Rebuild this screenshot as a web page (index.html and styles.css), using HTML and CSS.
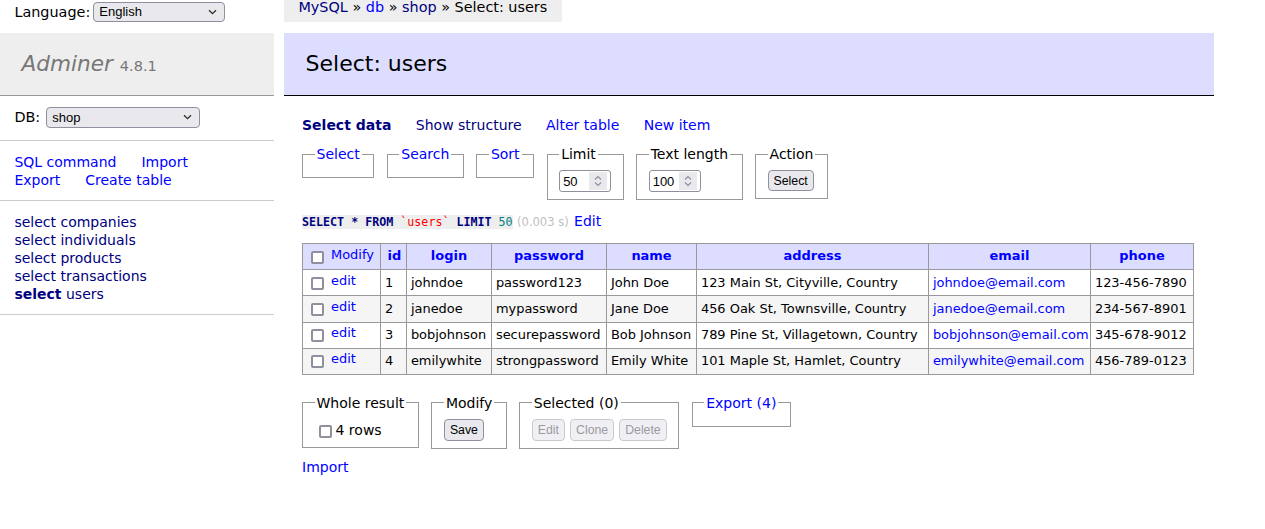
FILE: index.html
```html
<!DOCTYPE html>
<html lang="en">
<head>
<meta charset="utf-8">
<title>Select: users - Adminer</title>
<link rel="stylesheet" href="styles.css">
</head>
<body>
<div class="page">
  <aside class="sidebar">
    <form class="lang">
      <span class="lang-label">Language:</span>
      <span class="selwrap lang-sel">
        <select class="sel"><option>English</option></select>
        <svg class="chev" width="9" height="6" viewBox="0 0 9 6"><path d="M1 1.2 L4.5 4.7 L8 1.2" fill="none" stroke="#2b2b2b" stroke-width="1.3"/></svg>
      </span>
    </form>
    <h1><a class="brand" href="#">Adminer</a> <span class="version">4.8.1</span></h1>
    <div class="menu-sec db">
      <span>DB:</span>
      <span class="selwrap db-sel">
        <select class="sel"><option>shop</option></select>
        <svg class="chev" width="9" height="6" viewBox="0 0 9 6"><path d="M1 1.2 L4.5 4.7 L8 1.2" fill="none" stroke="#2b2b2b" stroke-width="1.3"/></svg>
      </span>
    </div>
    <div class="menu-sec links">
      <div class="link-row"><a href="#">SQL command</a><a href="#">Import</a></div>
      <div class="link-row"><a href="#">Export</a><a href="#">Create table</a></div>
    </div>
    <ul class="menu-sec tables">
      <li><a class="v" href="#">select</a> <a class="v" href="#">companies</a></li>
      <li><a class="v" href="#">select</a> <a class="v" href="#">individuals</a></li>
      <li><a class="v" href="#">select</a> <a class="v" href="#">products</a></li>
      <li><a class="v" href="#">select</a> <a class="v" href="#">transactions</a></li>
      <li><a class="v active" href="#">select</a> <a class="v" href="#">users</a></li>
    </ul>
  </aside>

  <main class="main">
    <div class="breadcrumb"><a class="v" href="#">MySQL</a> » <a href="#">db</a> » <a class="v" href="#">shop</a> » Select: users</div>
    <h2>Select: users</h2>
    <div class="content">
      <p class="tabs">
        <a class="v active" href="#">Select data</a>
        <a class="v" href="#">Show structure</a>
        <a href="#">Alter table</a>
        <a href="#">New item</a>
      </p>

      <form class="fsets">
        <fieldset><legend><a href="#">Select</a></legend></fieldset>
        <fieldset><legend><a href="#">Search</a></legend></fieldset>
        <fieldset><legend><a href="#">Sort</a></legend></fieldset>
        <fieldset><legend>Limit</legend>
          <span class="num"><input class="num-in" value="50"><span class="spin"><svg width="18" height="18" viewBox="0 0 18 18"><path d="M6 7.5 L9 4.5 L12 7.5 M6 10.5 L9 13.5 L12 10.5" fill="none" stroke="#8f8f9d" stroke-width="1.2"/></svg></span></span>
        </fieldset>
        <fieldset><legend>Text length</legend>
          <span class="num"><input class="num-in" value="100"><span class="spin"><svg width="18" height="18" viewBox="0 0 18 18"><path d="M6 7.5 L9 4.5 L12 7.5 M6 10.5 L9 13.5 L12 10.5" fill="none" stroke="#8f8f9d" stroke-width="1.2"/></svg></span></span>
        </fieldset>
        <fieldset><legend>Action</legend>
          <button type="button" class="btn btn-select">Select</button>
        </fieldset>
      </form>

      <p class="sql"><code class="jush"><span class="kw">SELECT</span> <span class="kw">*</span> <span class="kw">FROM</span> <span class="bac">`users`</span> <span class="kw">LIMIT</span> <span class="numv">50</span></code> <span class="time">(0.003 s)</span> <a href="#">Edit</a></p>

      <table class="data">
        <colgroup>
          <col class="c-mod"><col class="c-id"><col class="c-login"><col class="c-pass"><col class="c-name"><col class="c-addr"><col class="c-mail"><col class="c-phone">
        </colgroup>
        <thead>
          <tr>
            <td class="chk"><input type="checkbox" class="cb"> <a class="lk" href="#">Modify</a></td>
            <th><a href="#">id</a></th>
            <th><a href="#">login</a></th>
            <th><a href="#">password</a></th>
            <th><a href="#">name</a></th>
            <th><a href="#">address</a></th>
            <th><a href="#">email</a></th>
            <th><a href="#">phone</a></th>
          </tr>
        </thead>
        <tbody>
          <tr>
            <td class="chk"><input type="checkbox" class="cb"> <a class="lk" href="#">edit</a></td>
            <td>1</td><td>johndoe</td><td>password123</td><td>John Doe</td><td>123 Main St, Cityville, Country</td><td><a href="#">johndoe@email.com</a></td><td>123-456-7890</td>
          </tr>
          <tr>
            <td class="chk"><input type="checkbox" class="cb"> <a class="lk" href="#">edit</a></td>
            <td>2</td><td>janedoe</td><td>mypassword</td><td>Jane Doe</td><td>456 Oak St, Townsville, Country</td><td><a href="#">janedoe@email.com</a></td><td>234-567-8901</td>
          </tr>
          <tr>
            <td class="chk"><input type="checkbox" class="cb"> <a class="lk" href="#">edit</a></td>
            <td>3</td><td>bobjohnson</td><td>securepassword</td><td>Bob Johnson</td><td>789 Pine St, Villagetown, Country</td><td><a href="#">bobjohnson@email.com</a></td><td>345-678-9012</td>
          </tr>
          <tr>
            <td class="chk"><input type="checkbox" class="cb"> <a class="lk" href="#">edit</a></td>
            <td>4</td><td>emilywhite</td><td>strongpassword</td><td>Emily White</td><td>101 Maple St, Hamlet, Country</td><td><a href="#">emilywhite@email.com</a></td><td>456-789-0123</td>
          </tr>
        </tbody>
      </table>

      <div class="footer">
        <div class="fsets">
          <fieldset><legend>Whole result</legend>
            <label class="all"><input type="checkbox" class="cb"> 4 rows</label>
          </fieldset>
          <fieldset><legend>Modify</legend>
            <button type="button" class="btn">Save</button>
          </fieldset>
          <fieldset><legend>Selected (0)</legend>
            <div class="btns">
              <button type="button" class="btn" disabled>Edit</button>
              <button type="button" class="btn" disabled>Clone</button>
              <button type="button" class="btn" disabled>Delete</button>
            </div>
          </fieldset>
          <fieldset><legend><a href="#">Export (4)</a></legend></fieldset>
        </div>
      </div>
      <p class="import"><a href="#">Import</a></p>
    </div>
  </main>
</div>
</body>
</html>
```

FILE: styles.css
```css
* { box-sizing: border-box; }

body {
  margin: 0;
  background: #fff;
  color: #000;
  font-family: "DejaVu Sans", Verdana, sans-serif;
  font-size: 14px;
  line-height: 18px;
}

a { color: #00f; text-decoration: none; }
a.v { color: #000080; }
a.active { font-weight: bold; }

.page { display: flex; align-items: flex-start; }

/* ---------- sidebar ---------- */
.sidebar { width: 274px; flex: none; }

.lang {
  height: 33px;
  margin: 0;
  padding: 2px 14.4px 0;
  display: flex;
  align-items: flex-start;
  gap: 3px;
  font-size: 14.4px;
}
.lang-label { line-height: 20px; }

.selwrap { position: relative; display: inline-block; }
.sel {
  appearance: none;
  -webkit-appearance: none;
  display: block;
  margin: 0;
  font-family: "Liberation Sans", Arial, sans-serif;
  font-size: 13px;
  color: #000;
  background: #e9e9ed;
  border: 1px solid #8f8f9d;
  border-radius: 4px;
  padding: 0 20px 0 5px;
}
.chev { position: absolute; top: 7px; right: 8px; pointer-events: none; }
.lang-sel .sel { width: 132px; height: 20px; line-height: 18px; }
.db-sel .sel { width: 154px; height: 21px; line-height: 19px; }

h1 {
  margin: 0;
  padding: 17.28px 21.6px;
  font-size: 21.6px;
  line-height: 27px;
  font-weight: normal;
  color: #777;
  background: #eee;
  border-bottom: 1px solid #999;
  white-space: nowrap;
}
.brand { color: #777; font-style: italic; }
.version { color: #777; font-size: 14.5px; line-height: 0; }

.menu-sec {
  margin: 0;
  padding: 11.52px 14.4px;
  border-bottom: 1px solid #ccc;
}
.db { display: flex; align-items: center; gap: 6px; font-size: 14.4px; padding-top: 11px; padding-bottom: 12px; }
.links { padding-top: 12.5px; padding-bottom: 11px; }
.link-row { display: flex; gap: 25px; white-space: nowrap; }
.tables { list-style: none; white-space: nowrap; }

/* ---------- main ---------- */
.main { margin-left: 10px; flex: none; }

.breadcrumb {
  width: fit-content;
  height: 22px;
  line-height: 14px;
  padding: 0 14.4px;
  font-size: 14.4px;
  background: #eee;
  white-space: nowrap;
}

h2 {
  margin: 11px 0 20px;
  padding: 17.28px 21.6px;
  font-size: 22px;
  line-height: 27px;
  font-weight: normal;
  color: #000;
  background: #ddf;
  border-bottom: 1px solid #000;
}

.content { padding: 0 20px 20px 18px; }

.tabs { margin: 0; white-space: nowrap; }
.tabs a { margin-right: 20px; }

.fsets { display: flex; align-items: flex-start; gap: 12.5px; margin: 0; }
fieldset {
  margin: 11.52px 0 0;
  padding: 7.2px 11.52px;
  border: 1px solid #999;
  min-width: 0;
}
legend { padding: 0 2px; line-height: 18px; }

.num {
  display: flex;
  align-items: center;
  width: 52px;
  height: 22px;
  padding: 0 3px 0 2px;
  border: 1px solid #8f8f9d;
  border-radius: 3px;
  background: #fff;
}
.num-in {
  border: 0;
  outline: 0;
  padding: 0 0 0 1px;
  margin: 0;
  width: 26px;
  flex: 1;
  font-family: "Liberation Sans", Arial, sans-serif;
  font-size: 13px;
  color: #000;
  background: transparent;
}
.spin { width: 18px; height: 18px; background: #e9e9ed; display: flex; flex: none; }

.btn {
  margin: 0;
  font-family: "Liberation Sans", Arial, sans-serif;
  font-size: 12.3px;
  line-height: 18px;
  color: #000;
  background: #e9e9ed;
  border: 1px solid #8f8f9d;
  border-radius: 4px;
  padding: 1px 5px;
  height: 22px;
}
.btn-select { height: 21px; padding: 0 5px; }
.btn:disabled {
  color: #9a9aa0;
  background: #f0f0f4;
  border-color: #c9c9cf;
}
.btns { display: flex; gap: 5px; }

.sql { margin: 11.52px 0 0; white-space: nowrap; }
.jush {
  background: #eee;
  font-family: "DejaVu Sans Mono", monospace;
  font-size: 11.66px;
}
.kw { color: #000080; font-weight: bold; }
.bac { color: red; }
.numv { color: #008080; }
.time { color: #c0c0c0; font-size: 11.5px; }
.sql a { margin-left: 1px; }

/* ---------- table ---------- */
.data {
  margin: 12px 0 0;
  border-collapse: collapse;
  table-layout: fixed;
  width: 891px;
  font-size: 12.96px;
  line-height: 16.2px;
  white-space: nowrap;
}
.c-mod { width: 78px; }
.c-id { width: 26px; }
.c-login { width: 85px; }
.c-pass { width: 115px; }
.c-name { width: 90px; }
.c-addr { width: 232px; }
.c-mail { width: 162px; }
.c-phone { width: 103px; }

.data td, .data th {
  border: 1px solid #999;
  padding: 2.6px 3.9px;
  height: 26px;
  vertical-align: middle;
  overflow: hidden;
}
.data thead td, .data thead th { background: #ddf; }
.data thead th { text-align: center; font-weight: bold; padding: 2.6px 6.5px; }
.data tbody tr:nth-child(2n) { background: #f5f5f5; }
.data .lk { vertical-align: 2px; }

.cb {
  appearance: none;
  -webkit-appearance: none;
  width: 13px;
  height: 13px;
  margin: 3px 3px 3px 4px;
  border: 2px solid #8f8f9d;
  border-radius: 2px;
  background: #fff;
  vertical-align: middle;
}

.footer { margin-top: 7.5px; }
.all { display: flex; align-items: center; height: 21px; }
.all .cb { margin: 3px 4px 0 4px; }

.import { margin: 9px 0 0; }
```
